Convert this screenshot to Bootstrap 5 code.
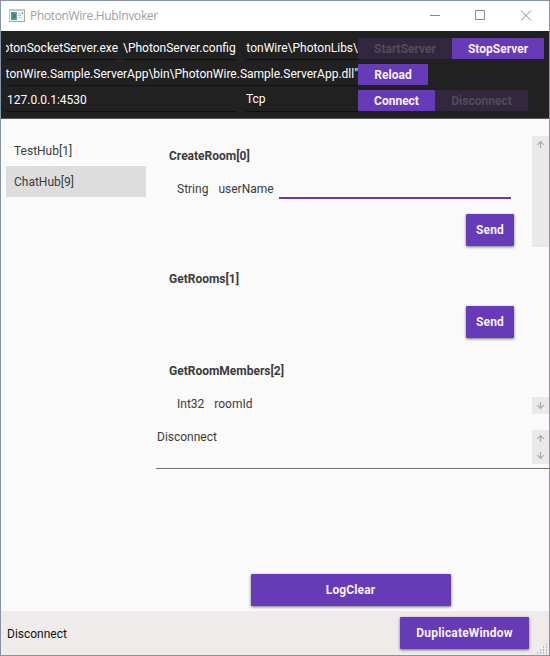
<!DOCTYPE html>
<html lang="en">
<head>
<meta charset="utf-8">
<meta name="viewport" content="width=device-width, initial-scale=1">
<title>PhotonWire.HubInvoker</title>
<link href="https://cdn.jsdelivr.net/npm/bootstrap@5.3.0/dist/css/bootstrap.min.css" rel="stylesheet">
<style>
body{margin:0;font-family:Roboto,"Liberation Sans",sans-serif;font-size:12px;line-height:16px;color:#3b3b3b;background:#fafafa;overflow:hidden}
.app-window{width:550px;height:656px;border:1px solid #8395a5}
.title-bar{height:30px;background:#fff;padding-left:8px;color:#a0a0a0;font:12px/28px "Open Sans","Noto Sans",sans-serif}
.title-text{margin-left:5px;letter-spacing:-.34px}
.caption-icons{gap:30px;margin-right:16px}
.server-panel{height:88px;background:#212121;color:#fff;border-bottom:1px solid #5c5c5c;padding:7px 4px 0 5px}
.server-row{height:21px;margin-bottom:5px}
.entry{height:22px;border-bottom:1px solid #111;line-height:20px;white-space:nowrap;overflow:hidden}
.entry-a{width:112px;margin-right:5px}
.entry-b{width:113px;margin-right:10px}
.entry-c{width:112px}
.entry-ab{width:230px;margin-right:10px;padding-left:1px}
.entry-abc{width:352px}
.entry-low{line-height:18px}
.btn.act{--bs-btn-font-size:12px;--bs-btn-font-weight:700;--bs-btn-padding-x:0;--bs-btn-padding-y:0;--bs-btn-border-width:0;--bs-btn-border-radius:1px;--bs-btn-bg:#673ab7;--bs-btn-color:#f6f2fb;--bs-btn-hover-bg:#7445c4;--bs-btn-hover-color:#fff;--bs-btn-disabled-bg:#31273f;--bs-btn-disabled-color:#514d56;--bs-btn-disabled-opacity:1;height:21px;line-height:23px}
.btn.raised{height:32px;line-height:32px;letter-spacing:.12px;box-shadow:0 1px 3px rgba(0,0,0,.55)}
.w-start{width:94px}.w-stop{width:92px}.w-reload{width:70px}.w-connect{width:77px}.w-disc{width:93px}
.w-send{width:48px}.w-log{width:200px;margin-right:4px}.btn.w-dup{width:129px;letter-spacing:.18px}
.main-area{height:492px}
.hub-list{width:145px;padding:16px 0 0 5px}
.hub-list .list-group-item{height:31px;padding:0 8px;line-height:33px;border:0;border-radius:0;background:none;color:#3b3b3b}
.hub-list .list-group-item.chosen{background:#ddd}
.detail{width:393px;margin-left:10px}
.methods{height:278px;margin-top:17px;overflow:hidden}
.method-list{width:376px;padding-left:13px}
.method-name{font-weight:700;line-height:16px}
.param{height:16px;padding-left:8px;gap:10px;margin-top:17px}
.param-input{width:232px;height:20px;border-bottom:2px solid #673ab7;margin-left:-4.5px}
.send-row{padding-right:18px;margin-top:17px}
.send-row+.method-name{margin-top:25px}
.method-name+.send-row{margin-top:19px}
.scroll-col{width:17px}
.scroll-part{background:#e9e9e9}
.scroll-part svg{display:block}
.log-box{height:55px;border-bottom:1px solid #717171;padding-top:16px}
.log-text{padding:0 0 0 1px;line-height:14px}
.log-action{margin-bottom:5px}
.status-bar{height:44px;background:#efebea;color:#111;padding-left:6px}
.status-text{padding-top:2px}
.grip{margin-left:7px;align-self:flex-end}
</style>
<script src="https://cdn.jsdelivr.net/npm/bootstrap@5.3.0/dist/js/bootstrap.bundle.min.js"></script>
</head>
<body>
<svg class="d-none">
<symbol id="arrow-up" viewBox="0 0 17 17"><path d="M8.5 12V6M5.2 8.9 8.5 5.6l3.3 3.3" fill="none" stroke="#aaa" stroke-width="1.3"/></symbol>
<symbol id="arrow-down" viewBox="0 0 17 17"><path d="M8.5 5v6M5.2 8.1l3.3 3.3 3.3-3.3" fill="none" stroke="#aaa" stroke-width="1.3"/></symbol>
</svg>
<div class="app-window d-flex flex-column">
<header class="title-bar d-flex align-items-center">
<svg width="16" height="14" viewBox="0 0 16 14"><path fill="#c7cacb" d="M0 0h16v13H0z"/><path fill="#a4aaac" d="M0 12h16v1H0zM15 1h1v12h-1z"/><path fill="#f3f5f5" d="M1 2h14v10H1z"/><path fill="#6f9db3" d="M2 3h6v8H2z"/><path fill="#4f9a79" d="M2 3h4v8H2z"/><path fill="#397da1" d="M4 5h3v4H4z"/><path fill="#bfc7cc" d="M9 4h3v1H9zM9 6h3v1H9zM9 8h3v1H9z"/><path fill="#7e99a6" d="M13 3h1v2h-1z"/></svg>
<span class="title-text">PhotonWire.HubInvoker</span>
<div class="caption-icons d-flex align-items-center ms-auto">
<svg width="16" height="12"><path d="M1 5.5h10" stroke="#888"/></svg>
<svg width="14" height="12"><path d="M.5 .5h9v9h-9z" fill="none" stroke="#888"/></svg>
<svg width="14" height="12"><path d="m2 .5 10 10M12 .5l-10 10" stroke="#888"/></svg>
</div>
</header>
<section class="server-panel">
<div class="server-row d-flex">
<div class="entry entry-a d-flex justify-content-end"><span>otonSocketServer.exe</span></div>
<div class="entry entry-b d-flex"><span>\PhotonServer.config</span></div>
<div class="entry entry-c d-flex justify-content-end"><span>tonWire\PhotonLibs\</span></div>
<button class="btn act w-start" disabled>StartServer</button><button class="btn act w-stop">StopServer</button>
</div>
<div class="server-row d-flex">
<div class="entry entry-abc d-flex justify-content-end"><span>tonWire.Sample.ServerApp\bin\PhotonWire.Sample.ServerApp.dll"</span></div>
<button class="btn act w-reload">Reload</button>
</div>
<div class="server-row d-flex">
<div class="entry entry-ab">127.0.0.1:4530</div>
<div class="entry entry-c entry-low">Tcp</div>
<button class="btn act w-connect">Connect</button><button class="btn act w-disc" disabled>Disconnect</button>
</div>
</section>
<main class="main-area d-flex">
<nav class="hub-list"><div class="list-group">
<a class="list-group-item">TestHub[1]</a>
<a class="list-group-item chosen">ChatHub[9]</a>
</div></nav>
<section class="detail d-flex flex-column">
<div class="methods d-flex">
<div class="method-list">
<div class="method-name mt-2 pt-1">CreateRoom[0]</div>
<div class="param d-flex align-items-center"><span>String</span><span>userName</span><div class="param-input"></div></div>
<div class="send-row d-flex justify-content-end"><button class="btn act raised w-send">Send</button></div>
<div class="method-name">GetRooms[1]</div>
<div class="send-row d-flex justify-content-end"><button class="btn act raised w-send">Send</button></div>
<div class="method-name">GetRoomMembers[2]</div>
<div class="param d-flex align-items-center"><span>Int32</span><span>roomId</span></div>
</div>
<div class="scroll-col d-flex flex-column justify-content-between">
<div class="scroll-part" style="height:111px"><svg width="17" height="17"><use href="#arrow-up"/></svg></div>
<div class="scroll-part"><svg width="17" height="17"><use href="#arrow-down"/></svg></div>
</div>
</div>
<div class="log-box d-flex justify-content-between">
<div class="log-text">Disconnect</div>
<div><div class="scroll-part"><svg width="17" height="17"><use href="#arrow-up"/></svg><svg width="17" height="17"><use href="#arrow-down"/></svg></div></div>
</div>
<div class="log-action d-flex justify-content-center mt-auto"><button class="btn act raised w-log">LogClear</button></div>
</section>
</main>
<footer class="status-bar d-flex align-items-center">
<span class="status-text">Disconnect</span>
<button class="btn act raised w-dup ms-auto">DuplicateWindow</button>
<svg class="grip" width="13" height="13" fill="#b3bac8"><path d="M10 1h1v2h-1zM10 4h1v2h-1zM7 4h1v2H7zM10 7h1v2h-1zM7 7h1v2H7zM4 7h1v2H4zM10 10h1v2h-1zM7 10h1v2H7zM4 10h1v2H4zM1 10h1v2H1z"/></svg>
</footer>
</div>
</body>
</html>
